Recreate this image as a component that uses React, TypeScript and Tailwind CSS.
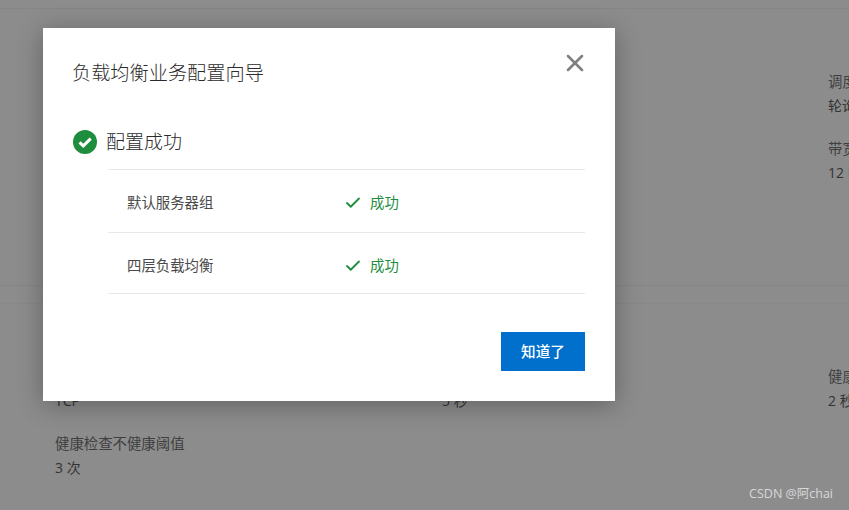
import { Check, X } from "lucide-react";

const cjk = "font-['Open_Sans','Noto_Sans_CJK_SC',sans-serif]";

function Field({ label, value }: { label: string; value: string }) {
  return (
    <div className="flex flex-col gap-[5px] mb-[24px]">
      <p className="text-[14.4px] leading-[19px] text-[#3f3f3f] whitespace-nowrap">{label}</p>
      <p className="text-[14px] leading-[19px] text-[#333] whitespace-nowrap">{value}</p>
    </div>
  );
}

function ResultRow({ name, rowClass }: { name: string; rowClass: string }) {
  return (
    <div className={`flex items-center pl-[19px] border-b border-[#e8e8e8] ${rowClass}`}>
      <p className="w-[218px] text-[14.4px] text-[#4a4a4a]">{name}</p>
      <Check className="size-[18px] text-[#1e8e3e] mr-[8px] -ml-[1px]" strokeWidth={2.4} />
      <p className="text-[14.4px] text-[#1e8e3e]">成功</p>
    </div>
  );
}

export default function App() {
  return (
    <div className={`relative w-[849px] h-[510px] overflow-hidden bg-[#8c8c8c] ${cjk}`}>
      {/* page behind the mask */}
      <div className="h-[278px] mt-[8px] border-t border-b border-[#858585] pt-[63px] pl-[828px]">
        <Field label="调度算法" value="轮询算法" />
        <Field label="带宽上限" value="12 Mbps" />
      </div>
      <div className="mt-[17px] border-t border-[#888888] grid grid-cols-[387px_386px_1fr] pl-[55px] pt-[63px]">
        <div>
          <Field label="健康检查协议" value="TCP" />
          <Field label="健康检查不健康阈值" value="3 次" />
        </div>
        <div>
          <Field label="健康检查响应超时" value="5 秒" />
        </div>
        <div>
          <Field label="健康检查间隔" value="2 秒" />
        </div>
      </div>

      <p className="absolute right-[16px] top-[486px] text-[12.5px] leading-[16px] text-[#d8d8d8]">CSDN @阿chai</p>

      {/* dialog */}
      <div className="absolute left-[43px] top-[28px] w-[572px] h-[373px] bg-white shadow-[0_4px_24px_rgba(0,0,0,0.3)] px-[30px] pt-[32px]">
        <button className="absolute right-[26px] top-[21px] text-[#808080]">
          <X className="size-[28px]" strokeWidth={2.2} />
        </button>
        <h1 className="text-[19.2px] leading-[26px] font-light text-[#2b2b2b] -ml-[1px]">负载均衡业务配置向导</h1>
        <div className="flex items-center mt-[36px] h-[40px]">
          <svg className="size-[24px] mr-[10px]" viewBox="0 0 24 24">
            <circle cx="12" cy="12" r="12" fill="#1e8e3e" />
            <path d="M6.5 12.3l3.8 3.6 7.4-7.2" fill="none" stroke="#fff" strokeWidth="3" />
          </svg>
          <p className="text-[19px] font-light text-[#2b2b2b] -ml-[1px]">配置成功</p>
        </div>
        <div className="ml-[35px] mt-[7px] border-t border-[#e8e8e8]">
          <ResultRow name="默认服务器组" rowClass="h-[63px] pt-[3px]" />
          <ResultRow name="四层负载均衡" rowClass="h-[61px] pt-[5px]" />
        </div>
        <div className="flex justify-end mt-[38px]">
          <button className="w-[84px] h-[39px] bg-[#0070cc] text-white text-[14.6px] font-medium">知道了</button>
        </div>
      </div>
    </div>
  );
}
